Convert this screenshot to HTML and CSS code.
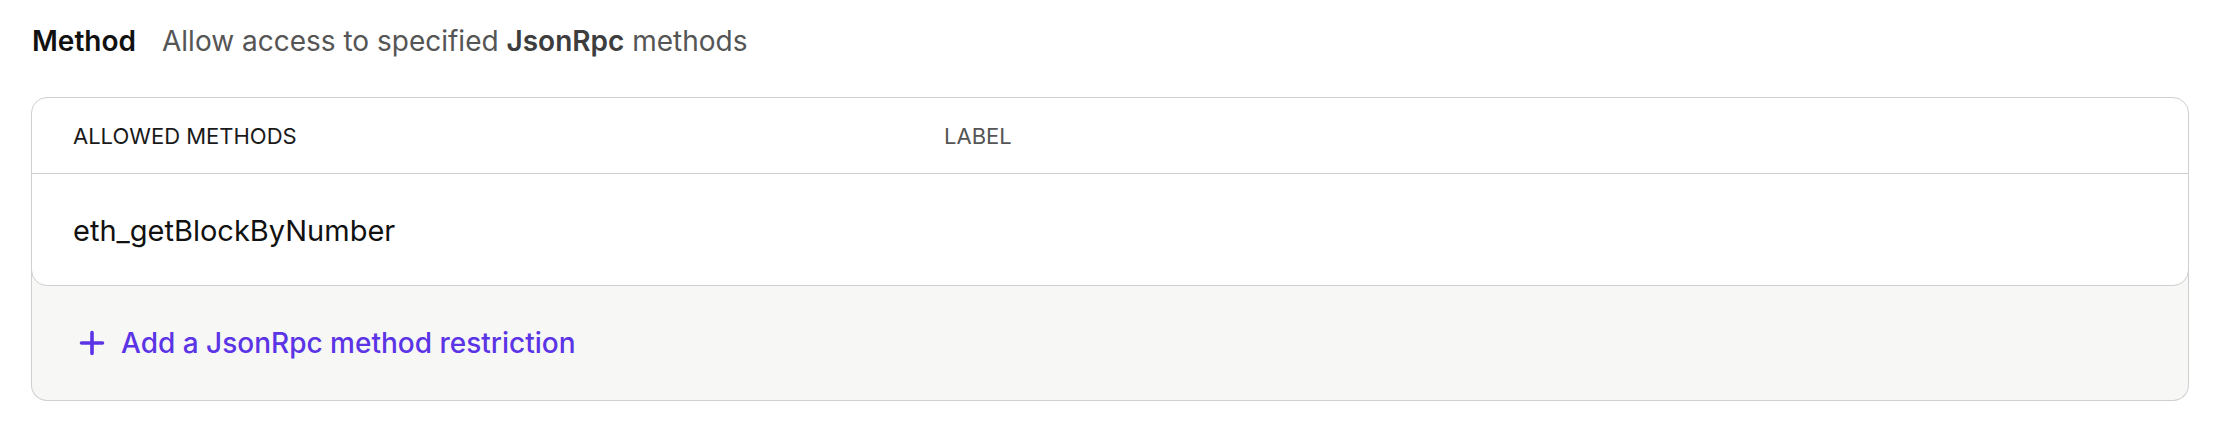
FILE: index.html
```html
<!DOCTYPE html>
<html lang="en">
<head>
<meta charset="utf-8">
<title>Method restrictions</title>
<link rel="stylesheet" href="styles.css">
</head>
<body>
<div class="page">
  <div class="heading">
    <span class="heading-title">Method</span>
    <span class="heading-desc">Allow access to specified <strong>JsonRpc</strong> methods</span>
  </div>
  <div class="card">
    <div class="table">
      <div class="row head">
        <div class="cell col-method head-dark">ALLOWED METHODS</div>
        <div class="cell col-label head-grey">LABEL</div>
      </div>
      <div class="row body-row">
        <div class="cell col-method">eth_getBlockByNumber</div>
        <div class="cell col-label"></div>
      </div>
    </div>
    <div class="footer">
      <a class="add-link" href="#">
        <svg class="plus" viewBox="0 0 26 26" width="26" height="26" aria-hidden="true">
          <path d="M13 2.5v21M2.5 13h21" fill="none" stroke="currentColor" stroke-width="3.6" stroke-linecap="round"/>
        </svg>
        <span>Add a JsonRpc method restriction</span>
      </a>
    </div>
  </div>
</div>
</body>
</html>
```
FILE: styles.css
```css
* { box-sizing: border-box; }

html, body {
  margin: 0;
  padding: 0;
  background: #ffffff;
  font-family: "Inter", "Liberation Sans", sans-serif;
  color: #111111;
}

.page {
  padding: 21px 31px 0 31px;
}

.heading {
  display: flex;
  align-items: center;
  gap: 26px;
  height: 40px;
  padding-left: 1px;
  font-size: 28px;
  line-height: 40px;
}

.heading-title {
  font-weight: 600;
  color: #111111;
}

.heading-desc {
  font-weight: 400;
  color: #555555;
}

.heading-desc strong {
  font-weight: 600;
  color: #3d3d3d;
}

.card {
  margin-top: 36px;
}

.table {
  position: relative;
  z-index: 1;
  background: #ffffff;
  border: 1px solid #cfcfcf;
  border-radius: 16px;
}

.row {
  display: flex;
  align-items: center;
}

.row.head {
  height: 76px;
  border-bottom: 1px solid #cfcfcf;
  font-size: 22px;
  font-weight: 400;
}

.row.body-row {
  height: 111px;
  padding-top: 2px;
  font-size: 29px;
  color: #111111;
}

.cell {
  padding-left: 41px;
}

.col-method {
  width: 40.4%;
}

.col-label {
  flex: 1;
}

.head-dark { color: #1a1a1a; }
.head-grey { color: #555555; }

.footer {
  margin-top: -16px;
  padding-top: 16px;
  height: 131px;
  background: #f7f7f5;
  border: 1px solid #cfcfcf;
  border-top: none;
  border-radius: 0 0 16px 16px;
  display: flex;
  align-items: center;
  padding-left: 47px;
}

.add-link {
  display: flex;
  align-items: center;
  gap: 16px;
  color: #5b34e6;
  text-decoration: none;
  font-size: 28px;
  font-weight: 500;
}

.plus {
  width: 26px;
  height: 26px;
  display: block;
}
```
